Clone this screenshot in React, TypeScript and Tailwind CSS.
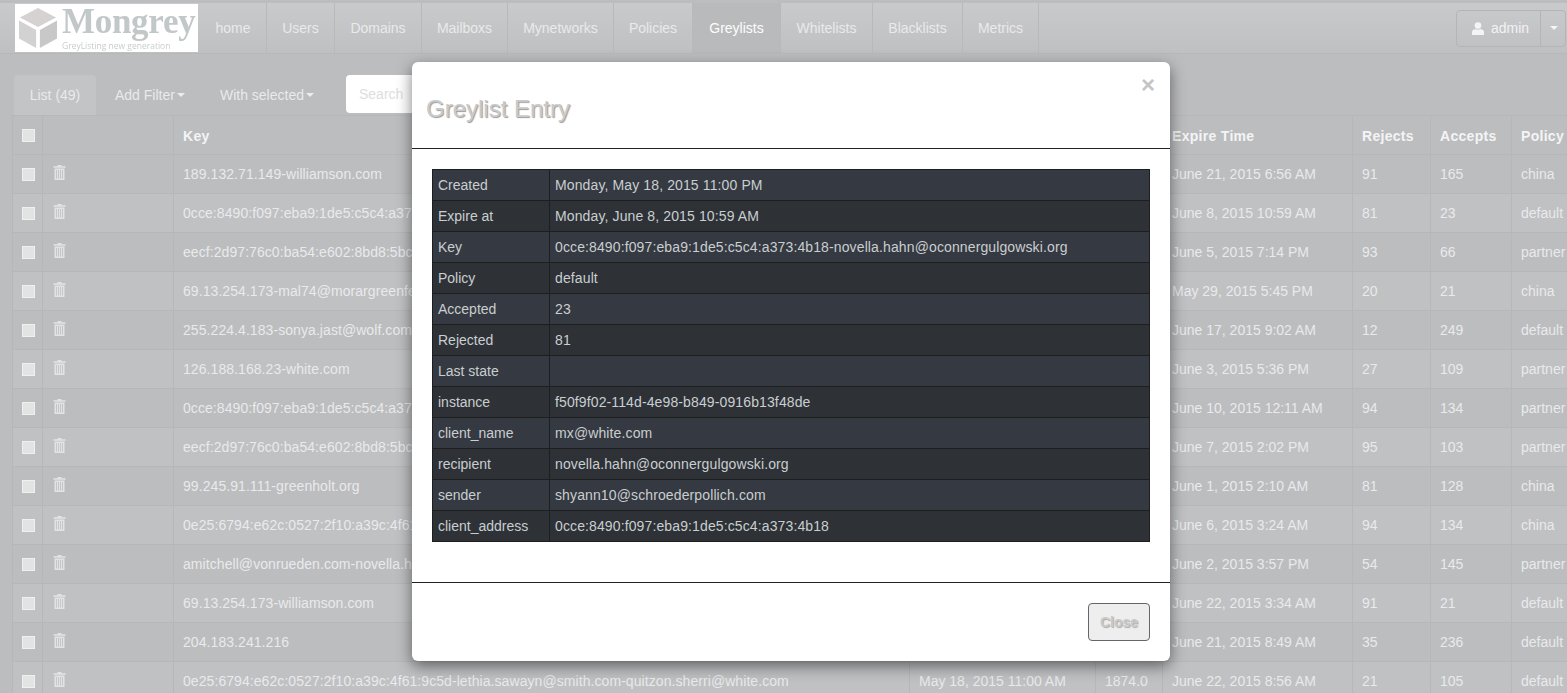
import React from "react";

const navItems: [string, string][] = [
  ["home", "w-[67px]"],
  ["Users", "w-[68px]"],
  ["Domains", "w-[87px]"],
  ["Mailboxs", "w-[86px]"],
  ["Mynetworks", "w-[106px]"],
  ["Policies", "w-[79px]"],
  ["Greylists", "w-[88px]"],
  ["Whitelists", "w-[92px]"],
  ["Blacklists", "w-[90px]"],
  ["Metrics", "w-[76px]"],
];

const rows = [
  ["189.132.71.149-williamson.com", "", "", "June 21, 2015 6:56 AM", "91", "165", "china"],
  ["0cce:8490:f097:eba9:1de5:c5c4:a37", "", "", "June 8, 2015 10:59 AM", "81", "23", "default"],
  ["eecf:2d97:76c0:ba54:e602:8bd8:5bc", "", "", "June 5, 2015 7:14 PM", "93", "66", "partner"],
  ["69.13.254.173-mal74@morargreenfe", "", "", "May 29, 2015 5:45 PM", "20", "21", "china"],
  ["255.224.4.183-sonya.jast@wolf.com", "", "", "June 17, 2015 9:02 AM", "12", "249", "default"],
  ["126.188.168.23-white.com", "", "", "June 3, 2015 5:36 PM", "27", "109", "partner"],
  ["0cce:8490:f097:eba9:1de5:c5c4:a37", "", "", "June 10, 2015 12:11 AM", "94", "134", "partner"],
  ["eecf:2d97:76c0:ba54:e602:8bd8:5bc", "", "", "June 7, 2015 2:02 PM", "95", "103", "partner"],
  ["99.245.91.111-greenholt.org", "", "", "June 1, 2015 2:10 AM", "81", "128", "china"],
  ["0e25:6794:e62c:0527:2f10:a39c:4f61", "", "", "June 6, 2015 3:24 AM", "94", "134", "china"],
  ["amitchell@vonrueden.com-novella.h", "", "", "June 2, 2015 3:57 PM", "54", "145", "partner"],
  ["69.13.254.173-williamson.com", "", "", "June 22, 2015 3:34 AM", "91", "21", "default"],
  ["204.183.241.216", "", "", "June 21, 2015 8:49 AM", "35", "236", "default"],
  ["0e25:6794:e62c:0527:2f10:a39c:4f61:9c5d-lethia.sawayn@smith.com-quitzon.sherri@white.com", "May 18, 2015 11:00 AM", "1874.0", "June 22, 2015 8:56 AM", "21", "105", "default"],
];

const details = [
  ["Created", "Monday, May 18, 2015 11:00 PM"],
  ["Expire at", "Monday, June 8, 2015 10:59 AM"],
  ["Key", "0cce:8490:f097:eba9:1de5:c5c4:a373:4b18-novella.hahn@oconnergulgowski.org"],
  ["Policy", "default"],
  ["Accepted", "23"],
  ["Rejected", "81"],
  ["Last state", ""],
  ["instance", "f50f9f02-114d-4e98-b849-0916b13f48de"],
  ["client_name", "mx@white.com"],
  ["recipient", "novella.hahn@oconnergulgowski.org"],
  ["sender", "shyann10@schroederpollich.com"],
  ["client_address", "0cce:8490:f097:eba9:1de5:c5c4:a373:4b18"],
];

function Trash() {
  return (
    <svg width="13" height="15" viewBox="0 0 13 15" className="ml-[1px] block" fill="#e2e3e4">
      <path d="M4.5 0h4v1.2H12.5v1.6H.5V1.2h4z" />
      <path d="M1.5 3.5h10V15h-10zM3.2 5v8.6h.8V5zM5.2 5v8.6h.8V5zM7.2 5v8.6h.8V5zM9.2 5v8.6h.8V5z" fillRule="evenodd" />
    </svg>
  );
}

function Check() {
  return (
    <input
      type="checkbox"
      readOnly
      className="block h-[13px] w-[13px] appearance-none border border-[#eff0f0] bg-[#e2e3e3]"
    />
  );
}

function Caret({ color = "#eceded" }: { color?: string }) {
  return (
    <svg width="8" height="4" viewBox="0 0 8 4" className="ml-[2px] inline-block align-middle" fill={color}>
      <path d="M0 0h8L4 4z" />
    </svg>
  );
}

function Logo() {
  return (
    <div className="flex h-[48px] w-[183px] shrink-0 bg-white pl-[4px] [font-family:'Liberation_Sans',sans-serif]">
      <svg width="38" height="40" viewBox="0 0 40 42" className="mt-[4px] shrink-0">
        <path d="M20 0 39 10 20 20 1 10z" fill="#d6d2d1" />
        <path d="M0 13 18 23V42L0 32z" fill="#d2d2d2" />
        <path d="M40 13 22 23V42L40 32z" fill="#c8c8c8" />
      </svg>
      <div className="ml-[5px] flex flex-col blur-[0.3px]">
        <span className="h-[35px] whitespace-nowrap text-[35px] leading-[35px] font-bold tracking-[-0.3px] text-[#c2c8c7] [font-family:'Liberation_Serif',serif]">
          Mongrey
        </span>
        <span className="mt-[1px] whitespace-nowrap text-[8.5px] leading-[12px] text-[#c9cccc] [font-family:'Open_Sans',sans-serif]">
          GreyListing new generation
        </span>
      </div>
    </div>
  );
}

const cell = "border border-[#b6b7b9] pl-[9px]";

export default function App() {
  return (
    <div className="relative h-[693px] w-[1567px] overflow-hidden bg-[#bcbdbf] pt-[3px] text-[14px] text-[#e9eaeb] [font-family:'Liberation_Sans',Arial,sans-serif]">
      <nav className="flex h-[51px] items-center border-b border-[#b7b8ba] bg-gradient-to-b from-[#c9cacc] to-[#bfc0c2] pl-[15px] pr-[1px]">
        <Logo />
        <ul className="ml-[2px] flex h-full">
          {navItems.map(([n, w]) => (
            <li
              key={n}
              className={
                n === "Greylists"
                  ? `flex h-full items-center justify-center border-r border-[#b8b9bb] bg-[#b9babc] text-[#fdfdfd] ${w}`
                  : `flex h-full items-center justify-center border-r border-[#b8b9bb] ${w}`
              }
            >
              {n}
            </li>
          ))}
        </ul>
        <div className="ml-auto flex h-[37px] w-[110px] items-center rounded-[4px] border border-[#b4b5b7] text-[#f2f2f3]">
          <div className="flex h-full w-[84px] items-center border-r border-[#b4b5b7] pl-[15px]">
            <svg width="12" height="13" viewBox="0 0 12 13" fill="#f4f4f5" className="mr-[7px]">
              <circle cx="6" cy="3.6" r="3.3" />
              <path d="M0 13V10c0-1.6 1.5-2.6 3.5-3 1.5 1 3.5 1 5 0 2 .4 3.5 1.4 3.5 3v3z" />
            </svg>
            admin
          </div>
          <div className="flex flex-1 justify-center">
            <Caret color="#f4f4f5" />
          </div>
        </div>
      </nav>

      <div className="ml-[14px] mt-[21px] flex h-[40px] items-stretch">
        <div className="flex w-[82px] items-center justify-center rounded-t-[4px] bg-[#c3c4c6]">List (49)</div>
        <div className="ml-[19px] flex items-center">
          Add Filter
          <Caret />
        </div>
        <div className="ml-[35px] flex items-center">
          With selected
          <Caret />
        </div>
        <div className="ml-[32px] flex h-[38px] w-[300px] items-center rounded-[4px] bg-white pl-[13px] text-[#dedede]">Search</div>
      </div>

      <table className="ml-[12px] w-[1570px] table-fixed border-collapse">
        <colgroup>
          <col className="w-[30px]" />
          <col className="w-[131px]" />
          <col className="w-[736px]" />
          <col className="w-[186px]" />
          <col className="w-[67px]" />
          <col className="w-[190px]" />
          <col className="w-[78px]" />
          <col className="w-[81px]" />
          <col />
        </colgroup>
        <thead>
          <tr className="h-[39px] bg-[#bcbdbf] text-left font-bold tracking-[0.3px] text-[#f4f4f5]">
            <th className={`${cell} pt-[1px]`}>
              <Check />
            </th>
            <th className={cell}></th>
            <th className={`${cell} pt-[3px]`}>Key</th>
            <th className={cell}></th>
            <th className={cell}></th>
            <th className={`${cell} pt-[3px]`}>Expire Time</th>
            <th className={`${cell} pt-[3px]`}>Rejects</th>
            <th className={`${cell} pt-[3px]`}>Accepts</th>
            <th className={`${cell} pt-[3px]`}>Policy</th>
          </tr>
        </thead>
        <tbody>
          {rows.map((r, i) => (
            <tr key={i} className={i % 2 === 0 ? "h-[39px] bg-[#bcbdbf]" : "h-[39px] bg-[#c0c1c3]"}>
              <td className={cell}>
                <Check />
              </td>
              <td className={cell}>
                <div className="-mt-[3px]">
                  <Trash />
                </div>
              </td>
              {r.map((c, j) => (
                <td key={j} className={j === 0 ? `${cell} overflow-hidden whitespace-nowrap tracking-[0.07px]` : `${cell} overflow-hidden whitespace-nowrap`}>
                  {c}
                </td>
              ))}
            </tr>
          ))}
        </tbody>
      </table>

      <div className="absolute left-[412px] top-[62px] flex h-[599px] w-[758px] flex-col rounded-[6px] bg-white shadow-[0_5px_15px_rgba(0,0,0,0.5)]">
        <div className="relative h-[87px] border-b border-[#222222]">
          <span className="absolute right-[15px] top-[11px] text-[24px] font-bold leading-[24px] text-[#c4c5c6]">×</span>
          <h4 className="pl-[14px] pt-[33px] text-[24px] leading-[28px] text-[#c9cacb] [text-shadow:1px_1px_1px_#999999]">
            Greylist Entry
          </h4>
        </div>
        <div className="h-[433px] px-[20px] pt-[20px]">
          <table className="w-[718px] table-fixed border-collapse border border-[#1c1e20] text-[#c9ced0]">
            <colgroup>
              <col className="w-[117px]" />
              <col />
            </colgroup>
            <tbody>
              {details.map(([k, v], i) => (
                <tr key={k} className={i % 2 === 0 ? "h-[31px] bg-[#353941]" : "h-[31px] bg-[#2e3237]"}>
                  <td className="border border-[#1c1e20] pl-[5px]">{k}</td>
                  <td className="border border-[#1c1e20] pl-[5px] tracking-[0.12px]">{v}</td>
                </tr>
              ))}
            </tbody>
          </table>
        </div>
        <div className="flex flex-1 items-start justify-end border-t border-[#222222] pr-[20px] pt-[20px]">
          <button className="h-[38px] w-[62px] rounded-[4px] border border-[#666666] bg-[#eeeeee] font-bold text-[#cacaca] [text-shadow:1px_1px_1px_#aaaaaa]">
            Close
          </button>
        </div>
      </div>
    </div>
  );
}
